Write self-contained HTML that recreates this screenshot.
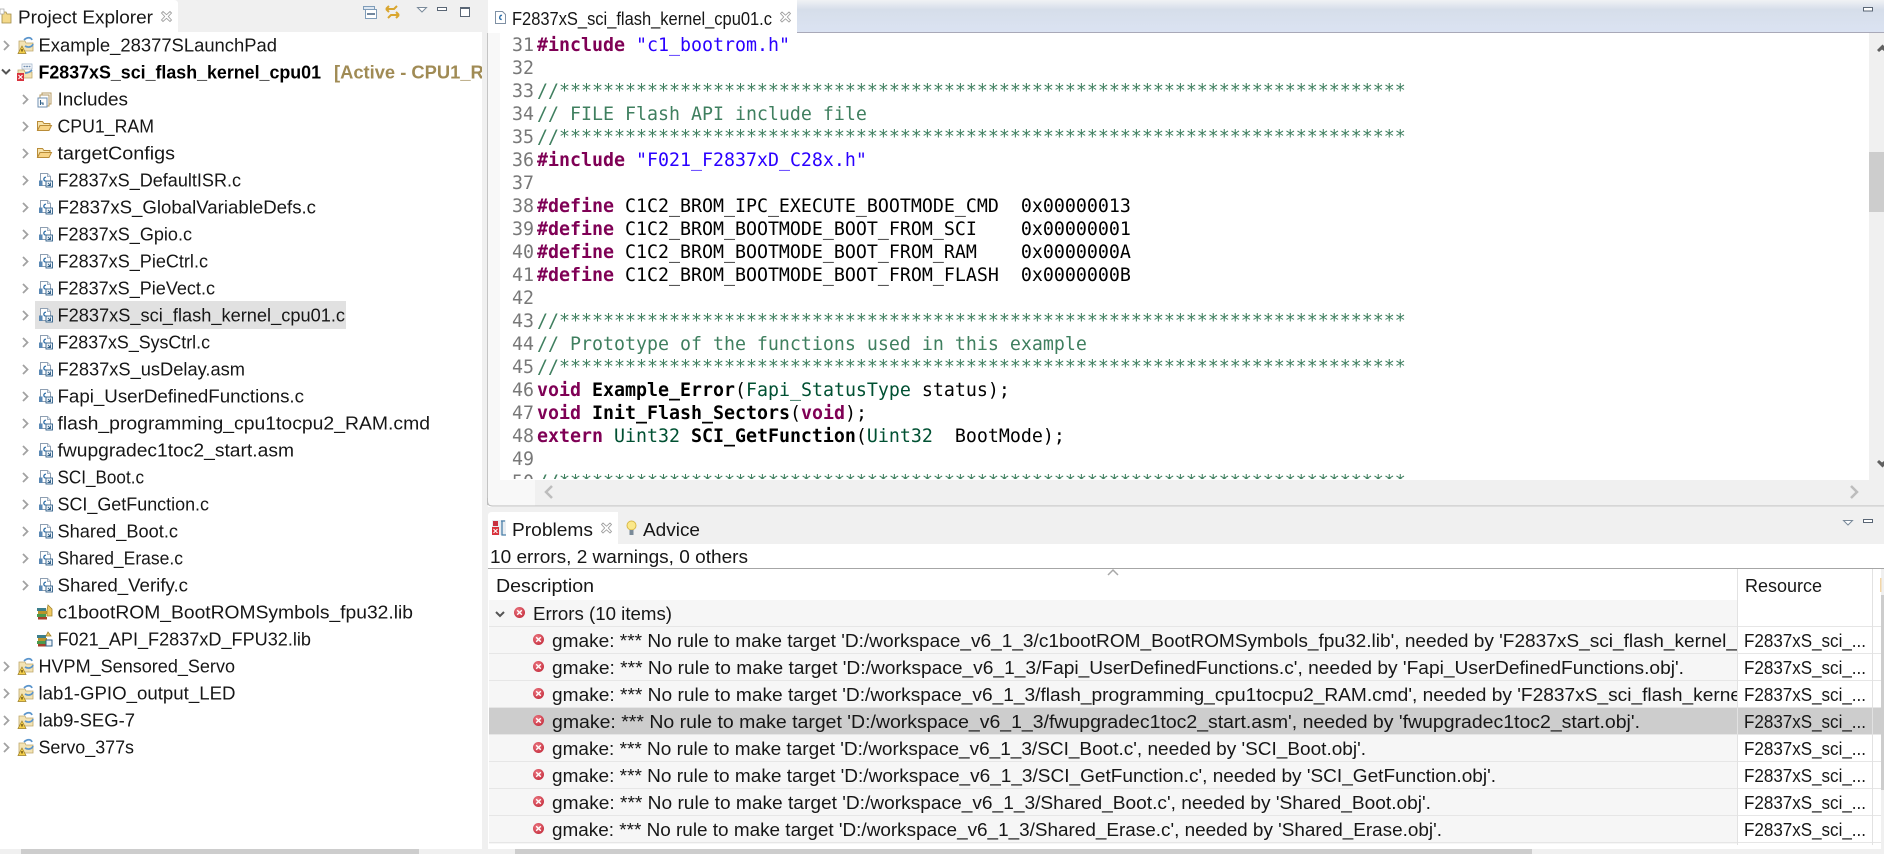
<!DOCTYPE html>
<html lang="en">
<head>
<meta charset="utf-8">
<title>Code Composer Studio</title>
<style>
html,body{margin:0;padding:0;background:#fff;overflow:hidden;width:1884px;height:854px}
svg{display:block}
text{white-space:pre}
.s{font-family:"Liberation Sans",sans-serif;font-size:18px;fill:#161616}
.b{font-weight:bold;fill:#000}
.m{font-family:"DejaVu Sans Mono","Liberation Mono",monospace;font-size:18.28px;fill:#000}
.n{fill:#787878}
.k{fill:#7f0055;font-weight:bold}
.c{fill:#3f7f5f}
.t{fill:#2a00ff}
.y{fill:#005032}
.f{font-weight:bold}
</style>
</head>
<body>
<svg width="1884" height="854" viewBox="0 0 1884 854" xmlns="http://www.w3.org/2000/svg">
<defs>
<linearGradient id="bar" x1="0" y1="0" x2="0" y2="1"><stop offset="0" stop-color="#f0f2f5"/><stop offset=".3" stop-color="#d6deea"/><stop offset="1" stop-color="#dbe3f2"/></linearGradient>
<radialGradient id="err" cx=".4" cy=".35" r=".75"><stop offset="0" stop-color="#ee7a84"/><stop offset="1" stop-color="#c22a3a"/></radialGradient>
<clipPath id="cd"><rect x="488" y="600" width="1249" height="250"/></clipPath>
<clipPath id="ct"><rect x="0" y="33" width="482" height="816"/></clipPath>
<clipPath id="ce"><rect x="488" y="33" width="1380" height="446"/></clipPath>

<g id="chev"><path d="M0 0l4.500 4.500L0 9" fill="none" stroke="#a2a2a2" stroke-width="1.800"/></g>
<g id="x"><path d="M1 0L4.500 3.200L8 0L9.500 1.500L6.300 5L9.500 8.500L8 10L4.500 6.800L1 10L-.5 8.500L2.700 5L-.5 1.500Z" fill="#fff" stroke="#a0a0a0" stroke-width=".9"/></g>
<g id="e"><circle cx="0" cy="0" r="5.500" fill="url(#err)"/><path d="M-2.300-2.300L2.300 2.300M2.300-2.300L-2.300 2.300" stroke="#fff" stroke-width="1.400"/></g>
<g id="proj">
<path d="M1 4h6l1 2h7v8H1z" fill="#f3e3b4" stroke="#bfa86c" stroke-width=".8"/>
<path d="M6 3c3-3 7-3 8 0M15 7c-1 3-5 4-8 2" fill="none" stroke="#5b95cc" stroke-width="1.700"/>
<path d="M4 9l4 7.500h-8z" fill="#f4cf4a" stroke="#9a7c22" stroke-width=".7"/>
<path d="M4 12v2.500" stroke="#402a00" stroke-width="1.100"/>
</g>
<g id="projx">
<path d="M1 7h6l1 2h7v6H1z" fill="#f3e3b4" stroke="#bfa86c" stroke-width=".8"/>
<path d="M8 10c3 0 5-1 7-3" fill="none" stroke="#5b95cc" stroke-width="1.700"/>
<path d="M5 1h10v5H5z" fill="#fff" stroke="#9bb0c8" stroke-width=".7"/>
<path d="M6.500 3.500h7" stroke="#6f8db0" stroke-width="1.500" stroke-dasharray="2 .6"/>
<rect x="0" y="10" width="7" height="8" fill="#d8323c"/>
<path d="M1.500 12l4 4M5.500 12l-4 4" stroke="#fff" stroke-width="1.100"/>
</g>
<g id="cf">
<path d="M1.500.5h7l3 3v9h-10z" fill="#fff" stroke="#8e9fb2"/>
<path d="M8.500.5v3h3" fill="#dbe5ef" stroke="#8e9fb2" stroke-width=".8"/>
<path d="M7 4.300c-2.300-.6-3.200 3.600-.5 3.600" fill="none" stroke="#2f6fa8" stroke-width="1.300"/>
<rect x="0" y="7.500" width="3.500" height="5.500" fill="#5a88b4"/>
<rect x="7" y="8" width="6.500" height="6" fill="#eef3f8" stroke="#2f5f88" stroke-width=".9"/>
<path d="M9 10l2.800 2.800M11.500 9.500v3h-3" fill="none" stroke="#2f5f88" stroke-width=".9"/>
</g>
<g id="fo">
<path d="M.5 3.500h5l1.500 2h6v2H3l-2.500 5z" fill="#f7e4ad" stroke="#b98c38"/>
<path d="M3 7.500h11.500l-2.500 5H.5z" fill="#f8d486" stroke="#b98c38"/>
</g>
<g id="lib">
<rect x="0" y="3" width="9" height="3" fill="#3c7f8c"/>
<rect x="1" y="6" width="9" height="3" fill="#b8942a"/>
<rect x="0" y="9" width="9" height="3" fill="#4a9a4e"/>
<rect x="1" y="12" width="9" height="2.500" fill="#a53f2a"/>
</g>
</defs>

<!-- backgrounds -->
<rect x="482" y="0" width="6" height="854" fill="#f0f0f0"/>
<rect x="0" y="0" width="482" height="32" fill="#f0f0f0"/>
<path d="M0 0H174q4 0 4 4V32H0z" fill="#fff"/>
<rect x="487" y="33" width="1" height="472" fill="#c4c4c4"/>

<!-- Project Explorer tab -->
<g transform="translate(0,9)"><path d="M2 3h4l1 2h4v9H2z" fill="#f4d98a" stroke="#a08a4a" stroke-width=".8"/><rect x="0" y="0" width="4" height="5" fill="#fff" stroke="#a0a0a0" stroke-width=".7"/></g>
<text class="s" x="18" y="23.500" textLength="135" lengthAdjust="spacingAndGlyphs">Project Explorer</text>
<use href="#x" x="162" y="11.500"/>
<!-- toolbar -->
<rect x="365.500" y="9.500" width="11" height="9" fill="#fff" stroke="#7f9cb8"/><rect x="363.500" y="6.500" width="11" height="3" fill="#dfe8f2" stroke="#7f9cb8"/><path d="M367 14h8" stroke="#44617f" stroke-width="1.500"/>
<path d="M386 9h8l3-3M386 9l3-3M386 9l3 3M399 15h-8l-3 3M399 15l-3-3M399 15l-3 3" fill="none" stroke="#d9a630" stroke-width="2"/>
<path d="M417.500 7.500h9l-4.500 4.500z" fill="#fff" stroke="#7a8a9a"/>
<rect x="437.500" y="7.500" width="9" height="3" fill="#fff" stroke="#5a6675"/>
<rect x="460.500" y="7.500" width="9" height="9" fill="#fff" stroke="#5a6675"/><rect x="460" y="7" width="10" height="2" fill="#5a6675"/>

<!-- Tree -->
<rect x="35" y="301" width="311" height="28" fill="#e1e1e1"/>
<g clip-path="url(#ct)">
<use href="#chev" x="4" y="41"/>
<path d="M2 69.500l4 4 4-4" fill="none" stroke="#555" stroke-width="2"/>
<use href="#chev" x="23" y="95"/><use href="#chev" x="23" y="122"/><use href="#chev" x="23" y="149"/><use href="#chev" x="23" y="176"/><use href="#chev" x="23" y="203"/><use href="#chev" x="23" y="230"/><use href="#chev" x="23" y="257"/><use href="#chev" x="23" y="284"/><use href="#chev" x="23" y="311"/><use href="#chev" x="23" y="338"/><use href="#chev" x="23" y="365"/><use href="#chev" x="23" y="392"/><use href="#chev" x="23" y="419"/><use href="#chev" x="23" y="446"/><use href="#chev" x="23" y="473"/><use href="#chev" x="23" y="500"/><use href="#chev" x="23" y="527"/><use href="#chev" x="23" y="554"/><use href="#chev" x="23" y="581"/>
<use href="#chev" x="4" y="662"/><use href="#chev" x="4" y="689"/><use href="#chev" x="4" y="716"/><use href="#chev" x="4" y="743"/>

<use href="#proj" x="18" y="37"/>
<use href="#projx" x="17" y="63"/>
<use href="#proj" x="18" y="658"/><use href="#proj" x="18" y="685"/><use href="#proj" x="18" y="712"/><use href="#proj" x="18" y="739"/>

<g transform="translate(37,92)"><rect x="5" y="1" width="9" height="11" fill="#fff" stroke="#b59a60"/><rect x="3" y="3" width="9" height="11" fill="#fff" stroke="#b59a60"/><rect x="1" y="6" width="9" height="9" fill="#fff" stroke="#6f8fb0"/><path d="M3.500 8v5M3.500 11h2.500v2" fill="none" stroke="#2f5f88" stroke-width="1.100"/></g>
<use href="#fo" x="37" y="118"/><use href="#fo" x="37" y="145"/>
<use href="#cf" x="39" y="173"/><use href="#cf" x="39" y="200"/><use href="#cf" x="39" y="227"/><use href="#cf" x="39" y="254"/><use href="#cf" x="39" y="281"/><use href="#cf" x="39" y="308"/><use href="#cf" x="39" y="335"/><use href="#cf" x="39" y="362"/><use href="#cf" x="39" y="389"/><use href="#cf" x="39" y="416"/><use href="#cf" x="39" y="443"/><use href="#cf" x="39" y="470"/><use href="#cf" x="39" y="497"/><use href="#cf" x="39" y="524"/><use href="#cf" x="39" y="551"/><use href="#cf" x="39" y="578"/>
<use href="#lib" x="37" y="605"/><path d="M48 605l4 4v7h-5v-6z" fill="#f0c860" stroke="#a0822a" stroke-width=".8"/>
<use href="#lib" x="37" y="632"/><path d="M48 632l3 4h-5z" fill="#f0c860" stroke="#a0822a" stroke-width=".8"/><rect x="46" y="640" width="6" height="6" fill="#eef3f8" stroke="#2f5f88"/>

<text class="s" x="38.500" y="51.700" textLength="238.500" lengthAdjust="spacingAndGlyphs">Example_28377SLaunchPad</text>
<text class="s b" x="38.500" y="78.700" textLength="282.500" lengthAdjust="spacingAndGlyphs">F2837xS_sci_flash_kernel_cpu01</text>
<text class="s" style="font-weight:bold;fill:#a08b55" x="334" y="78.700" textLength="163" lengthAdjust="spacingAndGlyphs">[Active - CPU1_RA</text>
<text class="s" x="57.500" y="105.700" textLength="70.500" lengthAdjust="spacingAndGlyphs">Includes</text>
<text class="s" x="57.500" y="132.700" textLength="96.500" lengthAdjust="spacingAndGlyphs">CPU1_RAM</text>
<text class="s" x="57.500" y="159.700" textLength="117.500" lengthAdjust="spacingAndGlyphs">targetConfigs</text>
<text class="s" x="57.500" y="186.700" textLength="183.500" lengthAdjust="spacingAndGlyphs">F2837xS_DefaultISR.c</text>
<text class="s" x="57.500" y="213.700" textLength="258.500" lengthAdjust="spacingAndGlyphs">F2837xS_GlobalVariableDefs.c</text>
<text class="s" x="57.500" y="240.700" textLength="134.500" lengthAdjust="spacingAndGlyphs">F2837xS_Gpio.c</text>
<text class="s" x="57.500" y="267.700" textLength="150.500" lengthAdjust="spacingAndGlyphs">F2837xS_PieCtrl.c</text>
<text class="s" x="57.500" y="294.700" textLength="157.500" lengthAdjust="spacingAndGlyphs">F2837xS_PieVect.c</text>
<text class="s" x="57.500" y="321.700" textLength="287.500" lengthAdjust="spacingAndGlyphs">F2837xS_sci_flash_kernel_cpu01.c</text>
<text class="s" x="57.500" y="348.700" textLength="152.500" lengthAdjust="spacingAndGlyphs">F2837xS_SysCtrl.c</text>
<text class="s" x="57.500" y="375.700" textLength="187.500" lengthAdjust="spacingAndGlyphs">F2837xS_usDelay.asm</text>
<text class="s" x="57.500" y="402.700" textLength="246.500" lengthAdjust="spacingAndGlyphs">Fapi_UserDefinedFunctions.c</text>
<text class="s" x="57.500" y="429.700" textLength="372.500" lengthAdjust="spacingAndGlyphs">flash_programming_cpu1tocpu2_RAM.cmd</text>
<text class="s" x="57.500" y="456.700" textLength="236.500" lengthAdjust="spacingAndGlyphs">fwupgradec1toc2_start.asm</text>
<text class="s" x="57.500" y="483.700" textLength="86.500" lengthAdjust="spacingAndGlyphs">SCI_Boot.c</text>
<text class="s" x="57.500" y="510.700" textLength="151.500" lengthAdjust="spacingAndGlyphs">SCI_GetFunction.c</text>
<text class="s" x="57.500" y="537.700" textLength="120.500" lengthAdjust="spacingAndGlyphs">Shared_Boot.c</text>
<text class="s" x="57.500" y="564.700" textLength="125.500" lengthAdjust="spacingAndGlyphs">Shared_Erase.c</text>
<text class="s" x="57.500" y="591.700" textLength="130.500" lengthAdjust="spacingAndGlyphs">Shared_Verify.c</text>
<text class="s" x="57.500" y="618.700" textLength="355.500" lengthAdjust="spacingAndGlyphs">c1bootROM_BootROMSymbols_fpu32.lib</text>
<text class="s" x="57.500" y="645.700" textLength="253.500" lengthAdjust="spacingAndGlyphs">F021_API_F2837xD_FPU32.lib</text>
<text class="s" x="38.500" y="672.700" textLength="196.500" lengthAdjust="spacingAndGlyphs">HVPM_Sensored_Servo</text>
<text class="s" x="38.500" y="699.700" textLength="197" lengthAdjust="spacingAndGlyphs">lab1-GPIO_output_LED</text>
<text class="s" x="38.500" y="726.700" textLength="96.500" lengthAdjust="spacingAndGlyphs">lab9-SEG-7</text>
<text class="s" x="38.500" y="753.700" textLength="95.500" lengthAdjust="spacingAndGlyphs">Servo_377s</text>
</g>
<!-- tree hscroll -->
<rect x="0" y="849" width="482" height="5" fill="#f0f0f0"/><rect x="21" y="849" width="398" height="5" fill="#cdcdcd"/>

<!-- Editor tab bar -->
<rect x="797" y="0" width="1087" height="32" fill="url(#bar)"/>
<rect x="797" y="32" width="1087" height="1" fill="#a9a9b8"/>
<path d="M488 33V4q0-4 4-4H793q4 0 4 4V33z" fill="#fff"/>
<rect x="1863.500" y="7.500" width="9" height="3.500" fill="#fff" stroke="#5a6675"/>
<g transform="translate(495,11)"><path d="M.5.500h7l3 3v9H.5z" fill="#fff" stroke="#7f90a4"/><path d="M7 4.500c-2.500-1-3.500 4.500-.3 3.800" fill="none" stroke="#2f6fa8" stroke-width="1.400"/></g>
<text class="s" x="512" y="25" textLength="260" lengthAdjust="spacingAndGlyphs">F2837xS_sci_flash_kernel_cpu01.c</text>
<use href="#x" x="781" y="12"/>

<!-- Editor -->
<rect x="488" y="33" width="12" height="447" fill="#f8f8f8"/>
<rect x="1869" y="33" width="15" height="447" fill="#f0f0f0"/>
<rect x="1869" y="152" width="15" height="60" fill="#cdcdcd"/>
<path d="M1877 50l5.500-5.500 1.500 1.500v5l-2-1.500-3 2.500z" fill="#606060"/>
<path d="M1877 462l5.500 5.500 1.500-1.500v-5l-2 1.500-3-2.500z" fill="#606060"/>
<g clip-path="url(#ce)">
<text class="m n" x="512" y="51">31</text><text class="m" x="537" y="51"><tspan class="k">#include</tspan> <tspan class="t">"c1_bootrom.h"</tspan></text>
<text class="m n" x="512" y="74">32</text>
<text class="m n" x="512" y="97">33</text><text class="m c" x="537" y="97">//*****************************************************************************</text>
<text class="m n" x="512" y="120">34</text><text class="m c" x="537" y="120">// FILE Flash API include file</text>
<text class="m n" x="512" y="143">35</text><text class="m c" x="537" y="143">//*****************************************************************************</text>
<text class="m n" x="512" y="166">36</text><text class="m" x="537" y="166"><tspan class="k">#include</tspan> <tspan class="t">"F021_F2837xD_C28x.h"</tspan></text>
<text class="m n" x="512" y="189">37</text>
<text class="m n" x="512" y="212">38</text><text class="m" x="537" y="212"><tspan class="k">#define</tspan> C1C2_BROM_IPC_EXECUTE_BOOTMODE_CMD  0x00000013</text>
<text class="m n" x="512" y="235">39</text><text class="m" x="537" y="235"><tspan class="k">#define</tspan> C1C2_BROM_BOOTMODE_BOOT_FROM_SCI    0x00000001</text>
<text class="m n" x="512" y="258">40</text><text class="m" x="537" y="258"><tspan class="k">#define</tspan> C1C2_BROM_BOOTMODE_BOOT_FROM_RAM    0x0000000A</text>
<text class="m n" x="512" y="281">41</text><text class="m" x="537" y="281"><tspan class="k">#define</tspan> C1C2_BROM_BOOTMODE_BOOT_FROM_FLASH  0x0000000B</text>
<text class="m n" x="512" y="304">42</text>
<text class="m n" x="512" y="327">43</text><text class="m c" x="537" y="327">//*****************************************************************************</text>
<text class="m n" x="512" y="350">44</text><text class="m c" x="537" y="350">// Prototype of the functions used in this example</text>
<text class="m n" x="512" y="373">45</text><text class="m c" x="537" y="373">//*****************************************************************************</text>
<text class="m n" x="512" y="396">46</text><text class="m" x="537" y="396"><tspan class="k">void</tspan> <tspan class="f">Example_Error</tspan>(<tspan class="y">Fapi_StatusType</tspan> status);</text>
<text class="m n" x="512" y="419">47</text><text class="m" x="537" y="419"><tspan class="k">void</tspan> <tspan class="f">Init_Flash_Sectors</tspan>(<tspan class="k">void</tspan>);</text>
<text class="m n" x="512" y="442">48</text><text class="m" x="537" y="442"><tspan class="k">extern</tspan> <tspan class="y">Uint32</tspan> <tspan class="f">SCI_GetFunction</tspan>(<tspan class="y">Uint32</tspan>  BootMode);</text>
<text class="m n" x="512" y="465">49</text>
<text class="m n" x="512" y="488">50</text><text class="m c" x="537" y="488">//*****************************************************************************</text>
</g>
<!-- editor hscroll -->
<rect x="488" y="480" width="47" height="26" fill="#f8f8f8"/>
<rect x="535" y="480" width="1349" height="26" fill="#f0f0f0"/>
<path d="M552 486l-6 6 6 6" fill="none" stroke="#bdbdbd" stroke-width="2.500"/>
<path d="M1851 486l6 6-6 6" fill="none" stroke="#bdbdbd" stroke-width="2.500"/>
<path d="M487.500 498v3q0 5 5 5H1884" fill="none" stroke="#bcbcbc"/>
<rect x="488" y="507" width="1396" height="5" fill="#f0f0f0"/>

<!-- Problems tab bar -->
<rect x="488" y="512" width="1396" height="32" fill="#f0f0f0"/>
<path d="M488 544V516q0-4 4-4H618V544z" fill="#fff"/>
<g transform="translate(492,520)"><rect x="0" y="0" width="14" height="15" fill="#e8edf2"/><rect x="1" y="1" width="5" height="5" fill="#c83040"/><rect x="0" y="7" width="7" height="8" fill="#d8323c"/><path d="M1.500 9l4 4M5.500 9l-4 4" stroke="#fff"/><path d="M9 1h4M10 1v14h4" fill="none" stroke="#4a7fa8" stroke-width="1.300"/></g>
<text class="s" x="512" y="536" textLength="81" lengthAdjust="spacingAndGlyphs">Problems</text>
<use href="#x" x="602" y="523"/>
<g transform="translate(626,520)"><circle cx="5.500" cy="5.500" r="4.500" fill="#fbe88a" stroke="#d8b848"/><rect x="3.500" y="10" width="4" height="5" fill="#7a8a98"/></g>
<text class="s" x="643" y="536" textLength="57" lengthAdjust="spacingAndGlyphs">Advice</text>
<path d="M1843.500 520.500h9l-4.500 4.500z" fill="#fff" stroke="#7a8a9a"/>
<rect x="1863.500" y="519.500" width="9" height="3" fill="#fff" stroke="#5a6675"/>

<!-- status -->
<rect x="488" y="544" width="1396" height="24" fill="#fff"/>
<text class="s" x="490" y="563" textLength="258" lengthAdjust="spacingAndGlyphs">10 errors, 2 warnings, 0 others</text>
<rect x="488" y="568" width="1396" height="1" fill="#a6a6a6"/>

<!-- table header -->
<text class="s" x="496" y="592" textLength="98" lengthAdjust="spacingAndGlyphs">Description</text>
<text class="s" x="1745" y="592" textLength="77" lengthAdjust="spacingAndGlyphs">Resource</text>
<path d="M1108 575l5-5 5 5" fill="none" stroke="#a8a8a8" stroke-width="1.500"/>

<!-- table rows -->
<rect x="489" y="600" width="1248" height="244" fill="#f6f6f6"/>
<rect x="489" y="708" width="1392" height="26.500" fill="#cdcdcd"/>
<g fill="#e6e6e6">
<rect x="489" y="626" width="1392" height="1"/><rect x="489" y="653" width="1392" height="1"/><rect x="489" y="680" width="1392" height="1"/><rect x="489" y="707" width="1392" height="1"/><rect x="489" y="734" width="1392" height="1"/><rect x="489" y="761" width="1392" height="1"/><rect x="489" y="788" width="1392" height="1"/><rect x="489" y="815" width="1392" height="1"/><rect x="489" y="842" width="1392" height="1"/>
</g>
<rect x="1737" y="569" width="1" height="276" fill="#e2e2e2"/>
<rect x="1872" y="569" width="1" height="276" fill="#e2e2e2"/>
<rect x="1881" y="569" width="3" height="285" fill="#f0f0f0"/>
<rect x="1881" y="595" width="3" height="195" fill="#cdcdcd"/>
<rect x="1880" y="578" width="1.500" height="14" fill="#f2d6a8"/>

<path d="M496 612l4 4 4-4" fill="none" stroke="#555" stroke-width="2"/>
<use href="#e" x="519.500" y="612.500"/>
<text class="s" x="533" y="620" textLength="139" lengthAdjust="spacingAndGlyphs">Errors (10 items)</text>

<use href="#e" x="538.500" y="639.500"/><use href="#e" x="538.500" y="666.500"/><use href="#e" x="538.500" y="693.500"/><use href="#e" x="538.500" y="720.500"/><use href="#e" x="538.500" y="747.500"/><use href="#e" x="538.500" y="774.500"/><use href="#e" x="538.500" y="801.500"/><use href="#e" x="538.500" y="828.500"/>

<g clip-path="url(#cd)">
<text class="s" x="552" y="647" textLength="1185" lengthAdjust="spacingAndGlyphs">gmake: *** No rule to make target 'D:/workspace_v6_1_3/c1bootROM_BootROMSymbols_fpu32.lib', needed by 'F2837xS_sci_flash_kernel_</text>
<text class="s" x="552" y="674" textLength="1132" lengthAdjust="spacingAndGlyphs">gmake: *** No rule to make target 'D:/workspace_v6_1_3/Fapi_UserDefinedFunctions.c', needed by 'Fapi_UserDefinedFunctions.obj'.</text>
<text class="s" x="552" y="701" textLength="1189" lengthAdjust="spacingAndGlyphs">gmake: *** No rule to make target 'D:/workspace_v6_1_3/flash_programming_cpu1tocpu2_RAM.cmd', needed by 'F2837xS_sci_flash_kerne</text>
<text class="s" x="552" y="728" textLength="1088" lengthAdjust="spacingAndGlyphs">gmake: *** No rule to make target 'D:/workspace_v6_1_3/fwupgradec1toc2_start.asm', needed by 'fwupgradec1toc2_start.obj'.</text>
<text class="s" x="552" y="755" textLength="814" lengthAdjust="spacingAndGlyphs">gmake: *** No rule to make target 'D:/workspace_v6_1_3/SCI_Boot.c', needed by 'SCI_Boot.obj'.</text>
<text class="s" x="552" y="782" textLength="944" lengthAdjust="spacingAndGlyphs">gmake: *** No rule to make target 'D:/workspace_v6_1_3/SCI_GetFunction.c', needed by 'SCI_GetFunction.obj'.</text>
<text class="s" x="552" y="809" textLength="879" lengthAdjust="spacingAndGlyphs">gmake: *** No rule to make target 'D:/workspace_v6_1_3/Shared_Boot.c', needed by 'Shared_Boot.obj'.</text>
<text class="s" x="552" y="836" textLength="890" lengthAdjust="spacingAndGlyphs">gmake: *** No rule to make target 'D:/workspace_v6_1_3/Shared_Erase.c', needed by 'Shared_Erase.obj'.</text>
</g>
<text class="s" x="1744" y="647" textLength="122" lengthAdjust="spacingAndGlyphs">F2837xS_sci_...</text>
<text class="s" x="1744" y="674" textLength="122" lengthAdjust="spacingAndGlyphs">F2837xS_sci_...</text>
<text class="s" x="1744" y="701" textLength="122" lengthAdjust="spacingAndGlyphs">F2837xS_sci_...</text>
<text class="s" x="1744" y="728" textLength="122" lengthAdjust="spacingAndGlyphs">F2837xS_sci_...</text>
<text class="s" x="1744" y="755" textLength="122" lengthAdjust="spacingAndGlyphs">F2837xS_sci_...</text>
<text class="s" x="1744" y="782" textLength="122" lengthAdjust="spacingAndGlyphs">F2837xS_sci_...</text>
<text class="s" x="1744" y="809" textLength="122" lengthAdjust="spacingAndGlyphs">F2837xS_sci_...</text>
<text class="s" x="1744" y="836" textLength="122" lengthAdjust="spacingAndGlyphs">F2837xS_sci_...</text>

<!-- problems hscroll -->
<rect x="488" y="849" width="1396" height="5" fill="#f0f0f0"/>
<rect x="515" y="849" width="1017" height="5" fill="#cdcdcd"/>
</svg>
</body>
</html>
